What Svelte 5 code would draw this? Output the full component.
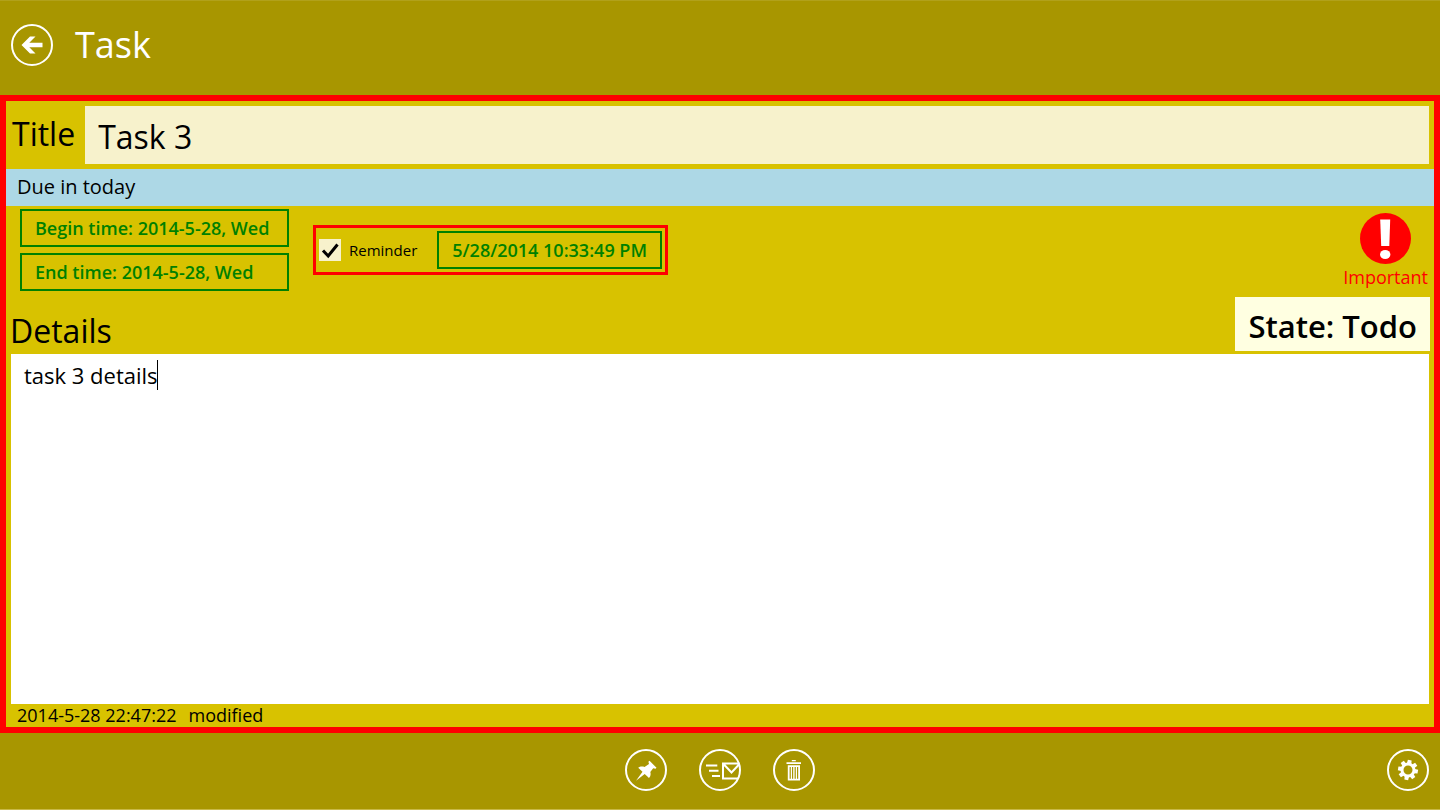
<script>
  let title = $state('Task 3');
  let details = $state('task 3 details');
  let reminder = $state(true);
  let editing = $state(false);
</script>

<div class="page">
  <header>
    <button class="round" aria-label="Back">
      <svg viewBox="0 0 42 42"><circle cx="21" cy="21" r="20" /><path class="fill" d="M10.500 21 19 12.500H24.500L18.300 18.800H31.500V23.200H18.300L24.500 29.500H19Z" /></svg>
    </button>
    <h1>Task</h1>
  </header>

  <main>
    <div class="title-row">
      <label for="title">Title</label>
      <input id="title" type="text" bind:value={title} />
    </div>

    <p class="due">Due in today</p>

    <div class="options">
      <div class="dates">
        <button class="date">Begin time: 2014-5-28, Wed</button>
        <button class="date">End time: 2014-5-28, Wed</button>
      </div>
      <div class="reminder">
        <label class="check">
          <span class="box">
            <input type="checkbox" bind:checked={reminder} />
            {#if reminder}
              <svg viewBox="0 0 22 22" aria-hidden="true"><path d="M4 11.500 9.200 17 18.500 5.500" /></svg>
            {/if}
          </span>
          Reminder
        </label>
        <button class="date">5/28/2014 10:33:49 PM</button>
      </div>
      <button class="important">
        <svg viewBox="0 0 51 51" aria-hidden="true">
          <circle cx="25.500" cy="25.500" r="25.500" fill="#ff0000" />
          <path d="M20.200 6.500H30.200L29.300 33H21.200Z" fill="#fff" />
          <ellipse cx="25.200" cy="41.500" rx="5.200" ry="4.500" fill="#fff" />
        </svg>
        Important
      </button>
    </div>

    <div class="details-head">
      <label for="details">Details</label>
      <button class="state">State: Todo</button>
    </div>
    <div class="editor">
      <textarea id="details" bind:value={details} onfocus={() => (editing = true)}></textarea>
      {#if !editing}<span class="caret"></span>{/if}
    </div>
    <p class="modified"><span>2014-5-28 22:47:22</span><span>modified</span></p>
  </main>

  <footer>
    <div class="actions">
      <button class="round" aria-label="Pin">
        <svg viewBox="0 0 42 42"><circle cx="21" cy="21" r="20" /><path class="fill" d="M24.500 11.700 31.500 18.700 30.500 19.800 28.200 19.200 25.300 23C26 25.500 25.500 27.500 24 29L19.700 24.900 11 31.800 17.500 22.700 13.200 18.700C15 17.300 17.500 17.300 19.500 18L24 15 23.400 12.700Z" /></svg>
      </button>
      <button class="round" aria-label="Send by mail">
        <svg viewBox="0 0 42 42"><circle cx="21" cy="21" r="20" /><path class="line" d="M7 16.500H18.300M10 21.700H19.500M13 27H21M40.500 14.500H24V29.500H39M24.500 15 32.500 23.500 40 15.500" /></svg>
      </button>
      <button class="round" aria-label="Delete">
        <svg viewBox="0 0 42 42"><circle cx="21" cy="21" r="20" /><path class="fill" fill-rule="evenodd" d="M18.800 11H22.800V12.200H18.800ZM13.500 13.200H28V15H13.500ZM14.800 16.200H27V31.500H14.800ZM16.600 18V29.700H17.800V18ZM19 18V29.700H20.200V18ZM21.600 18V29.700H22.800V18ZM24 18V29.700H25.200V18Z" /></svg>
      </button>
    </div>
    <button class="round" aria-label="Settings">
      <svg viewBox="0 0 42 42"><circle cx="21" cy="21" r="20" />
        <circle cx="21" cy="21" r="6" class="ring" />
        <g class="fill">
          {#each [10, 55, 100, 145, 190, 235, 280, 325] as angle}
            <path d="M18.800 14.500 19.100 11H22.900L23.200 14.500Z" transform="rotate({angle} 21 21)" />
          {/each}
        </g>
      </svg>
    </button>
  </footer>
</div>

<style>
  :global(body) { margin: 0; }
  * { box-sizing: border-box; }
  .page {
    display: flex;
    flex-direction: column;
    min-height: 100vh;
    background: #a89600;
    color: #000;
    font-family: "Open Sans", "Noto Sans", sans-serif;
  }
  button, input, textarea { font: inherit; color: inherit; border: 0; border-radius: 0; margin: 0; }
  button { cursor: pointer; background: none; padding: 0; }
  p, h1 { margin: 0; }
  header {
    display: flex;
    align-items: center;
    gap: 22px;
    height: 95px;
    padding: 0 11px 6px;
    color: #fff;
    border-top: 1px solid #b1a11b;
  }
  h1 { font-size: 36px; line-height: 48px; font-weight: 400; }
  .round { width: 42px; height: 42px; flex: none; }
  .round svg { display: block; width: 100%; height: 100%; fill: none; stroke: #fff; stroke-width: 2; }
  .round .fill { fill: #fff; stroke: none; }
  .round .ring { stroke-width: 3; }
  main {
    flex: 1;
    display: flex;
    flex-direction: column;
    border: 6px solid #ff0000;
    background: #d8c200;
  }
  .title-row {
    display: flex;
    align-items: center;
    gap: 10px;
    padding: 5px 5px 5px 6px;
    font-size: 32px;
    line-height: 40px;
  }
  .title-row label { padding-bottom: 2px; }
  .title-row input {
    flex: 1;
    min-width: 0;
    height: 58px;
    padding: 2px 13px 0;
    background: #f7f2cc;
    outline: 0;
  }
  .due { height: 37px; padding: 0 11px; font-size: 20px; line-height: 35px; background: #add8e6; }
  .options { display: flex; align-items: flex-start; padding: 3px 6px 0 14px; }
  .dates { display: flex; flex-direction: column; gap: 6px; width: 269px; }
  .date {
    height: 38px;
    padding: 0 13px;
    border: 2px solid #008000;
    color: #008000;
    font-size: 18px;
    line-height: 34px;
    font-weight: 600;
    text-align: left;
    white-space: nowrap;
  }
  .reminder {
    display: flex;
    align-items: center;
    gap: 20px;
    margin: 16px 0 0 24px;
    padding: 3px;
    border: 3px solid #ff0000;
  }
  .check { display: flex; align-items: center; gap: 8px; font-size: 15px; line-height: 20px; }
  .box { display: grid; width: 22px; height: 22px; }
  .box > * { grid-area: 1 / 1; }
  .box input { appearance: none; background: #f7f2cc; }
  .box svg { fill: none; stroke: #000; stroke-width: 3; pointer-events: none; }
  .important {
    display: flex;
    flex-direction: column;
    align-items: center;
    margin: 4px 0 0 auto;
    color: #ff0000;
    font-size: 18px;
    line-height: 26px;
  }
  .important svg { width: 51px; height: 51px; }
  .details-head {
    display: flex;
    justify-content: space-between;
    align-items: flex-start;
    padding: 6px 4px 3px 4px;
    font-size: 32px;
    line-height: 44px;
  }
  .details-head label { padding-top: 14px; line-height: 40px; }
  .state { height: 54px; padding: 4px 13px 0; background: #ffffe1; font-size: 31px; font-weight: 600; }
  .editor { position: relative; flex: 1; display: flex; margin: 0 5px; }
  textarea {
    flex: 1;
    min-width: 0;
    min-height: 120px;
    padding: 6px 13px;
    background: #fff;
    font-size: 22px;
    line-height: 30px;
    resize: none;
    outline: 0;
  }
  .caret { position: absolute; left: 146px; top: 6px; width: 1px; height: 30px; background: #000; }
  .modified { display: flex; gap: 12px; padding: 0 11px; font-size: 18px; line-height: 23px; }
  footer {
    display: grid;
    grid-template-columns: 1fr auto 1fr;
    align-items: center;
    height: 77px;
    padding: 0 11px 2px;
    border-bottom: 1px solid #c9b947;
  }
  .actions { display: flex; gap: 32px; grid-column: 2; }
  footer > .round { justify-self: end; }
</style>
